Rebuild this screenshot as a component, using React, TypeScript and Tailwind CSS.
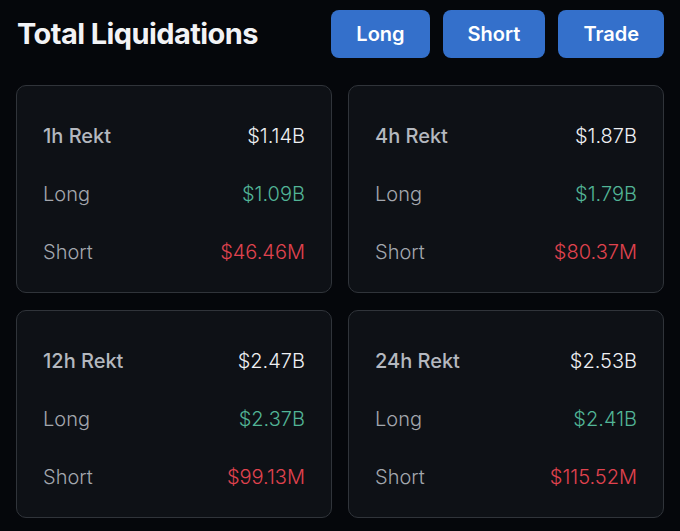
const cards = [
  { label: '1h Rekt', total: '$1.14B', long: '$1.09B', short: '$46.46M' },
  { label: '4h Rekt', total: '$1.87B', long: '$1.79B', short: '$80.37M' },
  { label: '12h Rekt', total: '$2.47B', long: '$2.37B', short: '$99.13M' },
  { label: '24h Rekt', total: '$2.53B', long: '$2.41B', short: '$115.52M' },
];

function StatCard({ label, total, long, short }: (typeof cards)[number]) {
  return (
    <div className="flex h-[208px] flex-col rounded-[10px] border border-[#30343a] bg-[#0e1116] px-[26px] pt-[34px] pb-[25px] text-[20px]">
      <div className="flex h-[32px] items-center justify-between">
        <span className="font-medium text-[#b4b8bf]">{label}</span>
        <span className="font-light text-[#eef0f3]">{total}</span>
      </div>
      <div className="mt-[27px] flex h-[32px] items-center justify-between">
        <span className="font-light text-[#a3a7ae]">Long</span>
        <span className="font-light text-[#52b596]">{long}</span>
      </div>
      <div className="mt-[27px] flex h-[32px] items-center justify-between">
        <span className="font-light text-[#a3a7ae]">Short</span>
        <span className="font-light text-[#e0434f]">{short}</span>
      </div>
    </div>
  );
}

export default function App() {
  return (
    <div className="h-[531px] w-[680px] bg-[#05070b] px-4 pt-[10px] font-['Inter',sans-serif]">
      <header className="flex items-center justify-between">
        <h1 className="pl-px text-[29px] font-bold tracking-[-0.02em] text-[#f2f3f6]">
          Total Liquidations
        </h1>
        <div className="flex gap-[13px]">
          {['Long', 'Short', 'Trade'].map((b) => (
            <button
              key={b}
              className="h-[48px] rounded-[8px] bg-[#3470cb] px-[25px] text-[20px] font-semibold text-white"
            >
              {b}
            </button>
          ))}
        </div>
      </header>
      <div className="mt-[27px] grid grid-cols-2 gap-x-4 gap-y-[17px]">
        {cards.map((c) => (
          <StatCard key={c.label} {...c} />
        ))}
      </div>
    </div>
  );
}
